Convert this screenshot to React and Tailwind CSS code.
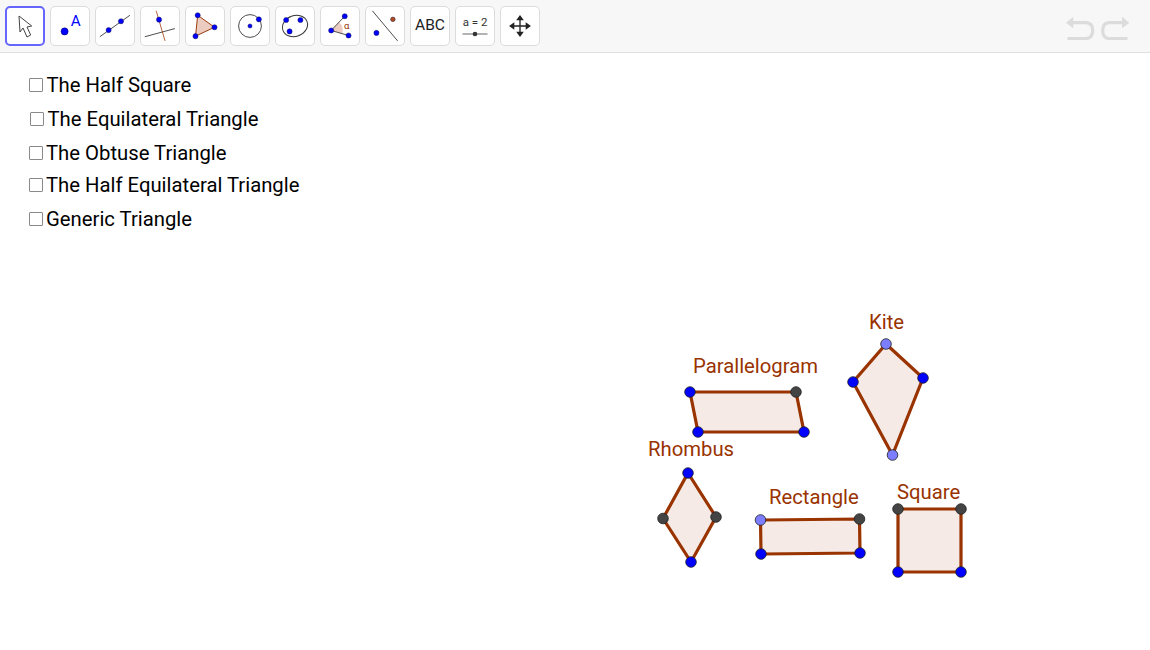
import React from "react";

const BLUE = "#0000ff";
const LIGHT = "#7d7dff";
const DARK = "#444444";
const BROWN = "#993300";

// construction data, page coordinates
const shapes = [
  {
    name: "parallelogram",
    points: [
      [690, 392, BLUE],
      [796, 392, DARK],
      [804, 432, BLUE],
      [698, 432, BLUE],
    ],
  },
  {
    name: "kite",
    points: [
      [886, 344, LIGHT],
      [923, 378, BLUE],
      [892.5, 455, LIGHT],
      [853, 382, BLUE],
    ],
  },
  {
    name: "rhombus",
    points: [
      [688, 473, BLUE],
      [716, 517, DARK],
      [691, 562, BLUE],
      [663, 518.5, DARK],
    ],
  },
  {
    name: "rectangle",
    points: [
      [760.5, 520, LIGHT],
      [859.5, 519, DARK],
      [860, 553, BLUE],
      [761, 554, BLUE],
    ],
  },
  {
    name: "square",
    points: [
      [898, 509, DARK],
      [961, 509, DARK],
      [961, 572, BLUE],
      [898, 572, BLUE],
    ],
  },
];

const Dot = ({ x, y, r = 2.7, fill = BLUE }) => (
  <circle cx={x} cy={y} r={r} fill={fill} stroke="#1a1a4a" strokeWidth="0.5" />
);

const Icon = ({ children }) => (
  <svg viewBox="0 0 40 40" className="w-[40px] h-[40px]">
    {children}
  </svg>
);

const ToolButton = ({ active, children }) => (
  <div
    className={`w-[40px] h-[40px] shrink-0 bg-white rounded-[5px] flex items-center justify-center ${
      active ? "border-2 border-[#6666ff]" : "border border-[#dcdcdc]"
    }`}
  >
    {children}
  </div>
);

const Toolbar = () => (
  <div className="h-[53px] shrink-0 flex items-start justify-between bg-[#f7f7f7] border-b border-[#e0e0e0] pt-[6px] pl-[5px] pr-[19px]">
    <div className="flex gap-[5px]">
      <ToolButton active>
        <svg viewBox="0 0 36 36" className="w-[36px] h-[36px]">
          <path
            d="M12 8 L13 24 L16 20 L20 29 L23.7 27 L20 19 L24.7 18 Z"
            fill="#fff"
            stroke="#444"
            strokeWidth="1"
            strokeLinejoin="round"
          />
        </svg>
      </ToolButton>
      <ToolButton>
        <Icon>
          <Dot x={14.3} y={25.7} r={3.8} />
          <text x={26} y={20.5} textAnchor="middle" fontSize="16" fill={BLUE} fontFamily="Roboto, sans-serif">
            A
          </text>
        </Icon>
      </ToolButton>
      <ToolButton>
        <Icon>
          <line x1="4" y1="31.3" x2="35.7" y2="8.7" stroke="#444" strokeWidth="1" />
          <Dot x={13.3} y={24.3} />
          <Dot x={26.3} y={15} />
        </Icon>
      </ToolButton>
      <ToolButton>
        <Icon>
          <line x1="4" y1="31.3" x2="35.7" y2="22.7" stroke="#444" strokeWidth="1" />
          <line x1="16" y1="4" x2="25.3" y2="35.7" stroke={BROWN} strokeWidth="1" strokeOpacity="0.8" />
          <Dot x={19} y={13.3} />
        </Icon>
      </ToolButton>
      <ToolButton>
        <Icon>
          <polygon
            points="12.3,8.7 30,21.3 10,30.7"
            fill="#ecccc0"
            stroke={BROWN}
            strokeWidth="1"
          />
          <Dot x={12.3} y={8.7} />
          <Dot x={30} y={21.3} />
          <Dot x={10} y={30.7} />
        </Icon>
      </ToolButton>
      <ToolButton>
        <Icon>
          <circle cx="20" cy="20" r="12" fill="none" stroke="#444" strokeWidth="1" />
          <Dot x={20} y={20} r={2.2} />
          <Dot x={29.3} y={13} />
        </Icon>
      </ToolButton>
      <ToolButton>
        <Icon>
          <ellipse
            cx="20"
            cy="20"
            rx="13.5"
            ry="11"
            transform="rotate(-20 20 20)"
            fill="none"
            stroke="#333"
            strokeWidth="1"
          />
          <Dot x={10.7} y={13.7} />
          <Dot x={25.7} y={13.7} />
          <Dot x={14.3} y={25.7} />
        </Icon>
      </ToolButton>
      <ToolButton>
        <Icon>
          <path d="M10.7 24.7 L19 16 A12 12 0 0 1 22.5 28 Z" fill="#ecccc0" />
          <path d="M25 9.7 L10.7 24.7 L29 30" fill="none" stroke="#444" strokeWidth="1" />
          <Dot x={25} y={9.7} />
          <Dot x={10.7} y={24.7} />
          <Dot x={29} y={30} />
          <text x={27} y={23.5} textAnchor="middle" fontSize="10" fill={BROWN} fontFamily="Roboto, sans-serif">
            α
          </text>
        </Icon>
      </ToolButton>
      <ToolButton>
        <Icon>
          <line x1="6.7" y1="4" x2="33.3" y2="35.7" stroke="#444" strokeWidth="1" />
          <Dot x={11} y={27.3} />
          <Dot x={28.3} y={13} r={2.4} fill="#b04a18" />
        </Icon>
      </ToolButton>
      <ToolButton>
        <span className="font-['Roboto',sans-serif] text-[15.5px] text-[#222]">ABC</span>
      </ToolButton>
      <ToolButton>
        <div className="flex flex-col items-center font-['Roboto',sans-serif] text-[#333]">
          <span className="text-[11.5px] leading-[13px] mt-[1px]">a = 2</span>
          <svg viewBox="0 0 26 6" className="w-[26px] h-[6px] mt-[2px]">
            <line x1="0.5" y1="3" x2="25.5" y2="3" stroke="#666" strokeWidth="1" />
            <circle cx="13" cy="3" r="2.3" fill="#333" />
          </svg>
        </div>
      </ToolButton>
      <ToolButton>
        <Icon>
          <path d="M20 12 V28 M12 20 H28" stroke="#222" strokeWidth="1.4" />
          <path
            d="M20 8.5 L24 14 H16 Z M20 31.5 L24 26 H16 Z M8.5 20 L14 16 V24 Z M31.5 20 L26 16 V24 Z"
            fill="#222"
          />
        </Icon>
      </ToolButton>
    </div>
    <svg viewBox="0 0 66 26" className="w-[66px] h-[26px] mt-[8px]">
      <g fill="none" stroke="#dcdcdc" strokeWidth="3.2">
        <path d="M8 8.7 H21 Q27.7 9 27.7 16.5 Q27.7 24 21 24.7 H2.5" />
        <path d="M57 8.7 H44 Q37.7 9 37.7 16.5 Q37.7 24 44 24.7 H62.5" />
      </g>
      <path d="M1 8.7 L8.3 2.7 V14.3 Z M64.3 8.7 L57 2.7 V14.3 Z" fill="#dcdcdc" />
    </svg>
  </div>
);

const CheckRow = ({ className, children }) => (
  <label className={`absolute flex items-center text-[20.3px] leading-[24px] text-black ${className}`}>
    <span className="w-[14px] h-[14px] border border-[#8a8a8a] rounded-[1px] bg-white shrink-0 mr-[3.5px]"></span>
    {children}
  </label>
);

const Label = ({ className, children }) => (
  <div className={`absolute text-[20.3px] leading-[24px] text-[#993300] ${className}`}>{children}</div>
);

const App = () => {
  return (
    <div className="w-[1150px] h-[650px] bg-white overflow-hidden flex flex-col font-['Roboto',sans-serif]">
      <Toolbar />
      {/* graphics view: everything in here sits on a free canvas */}
      <div className="relative flex-1">
        <CheckRow className="left-[29px] top-[20px]">The Half Square</CheckRow>
        <CheckRow className="left-[30px] top-[54px]">The Equilateral Triangle</CheckRow>
        <CheckRow className="left-[28.5px] top-[88px]">The Obtuse Triangle</CheckRow>
        <CheckRow className="left-[28.5px] top-[120px]">The Half Equilateral Triangle</CheckRow>
        <CheckRow className="left-[28.5px] top-[154px]">Generic Triangle</CheckRow>

        <svg viewBox="0 53 1150 597" className="absolute inset-0 w-[1150px] h-[597px]">
          {shapes.map((s) => (
            <polygon
              key={s.name}
              points={s.points.map((p) => `${p[0]},${p[1]}`).join(" ")}
              fill="#993300"
              fillOpacity="0.1"
              stroke="#993300"
              strokeWidth="3.2"
            />
          ))}
          {shapes.map((s) =>
            s.points.map((p) => (
              <circle
                key={`${s.name}-${p[0]}`}
                cx={p[0]}
                cy={p[1]}
                r="5.3"
                fill={p[2]}
                stroke="#222"
                strokeWidth="0.8"
              />
            ))
          )}
        </svg>

        <Label className="left-[869px] top-[257px]">Kite</Label>
        <Label className="left-[693px] top-[301px]">Parallelogram</Label>
        <Label className="left-[648px] top-[384px]">Rhombus</Label>
        <Label className="left-[769px] top-[432px]">Rectangle</Label>
        <Label className="left-[897px] top-[427px]">Square</Label>
      </div>
    </div>
  );
};

export default App;
